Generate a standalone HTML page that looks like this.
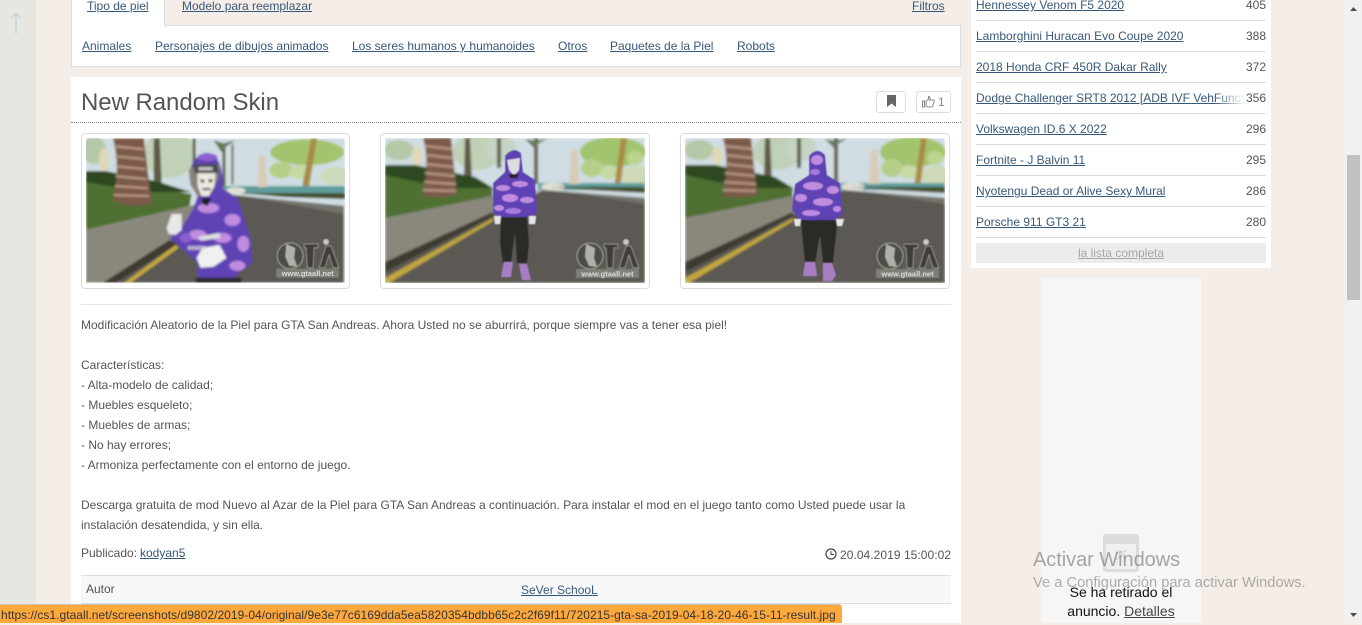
<!DOCTYPE html>
<html lang="es"><head><meta charset="utf-8"><title>New Random Skin</title>
<style>
html,body{margin:0;padding:0;width:1362px;height:623px;overflow:hidden;background:#f5eee8;font:12px/20px "Liberation Sans",Arial,sans-serif;color:#555}
div,a,span,svg{position:absolute;white-space:nowrap}
a{color:#38587a;text-decoration:underline;line-height:20px}
.g{line-height:20px;left:81px}
.sep{left:976px;width:290px;height:1px;background:#ddd}
.v{left:1226px;width:40px;text-align:right;color:#555}
.r{left:976px}
.card{width:268px;height:154px;top:133px;border:1px solid #ddd;border-radius:4px;background:#fff}
</style></head><body>
<div style="left:0;top:0;width:36px;height:623px;background:#e8e6e1"></div>
<svg style="left:9px;top:11px" width="14" height="24" viewBox="0 0 14 24"><path d="M7 1V23M2.500 7.500 7 2l4.500 5.500" fill="none" stroke="#c5d6e0" stroke-width="1.500"/></svg>

<div style="left:71px;top:0;width:890px;height:25px;border-bottom:1px solid #ddd"></div>
<div style="left:71px;top:0;width:92px;height:26px;background:#fff;border-right:1px solid #ddd;border-left:1px solid #ddd"></div>
<a style="left:87px;top:-4px">Tipo de piel</a>
<a style="left:182px;top:-4px">Modelo para reemplazar</a>
<a style="left:912px;top:-4px">Filtros</a>
<div style="left:71px;top:26px;width:888px;height:40px;background:#fff;border:1px solid #ddd;border-top:0"></div>
<a style="left:82px;top:36px">Animales</a>
<a style="left:155px;top:36px">Personajes de dibujos animados</a>
<a style="left:352px;top:36px">Los seres humanos y humanoides</a>
<a style="left:558px;top:36px">Otros</a>
<a style="left:610px;top:36px">Paquetes de la Piel</a>
<a style="left:737px;top:36px">Robots</a>

<div style="left:71px;top:77px;width:890px;height:546px;background:#fff"></div>
<div style="left:81px;top:89px;font-size:24px;line-height:28px;color:#555;letter-spacing:-.05px">New Random Skin</div>
<div style="left:71px;top:122px;width:890px;height:0;border-top:1px dotted #888"></div>
<div style="left:876px;top:91px;width:28px;height:20px;border:1px solid #ddd;border-radius:3px"></div>
<svg style="left:886px;top:95px" width="11" height="13" viewBox="0 0 11 13"><path d="M1 0H10V12L5.500 8.500 1 12Z" fill="#666"/></svg>
<div style="left:916px;top:91px;width:33px;height:20px;border:1px solid #ddd;border-radius:3px"></div>
<svg style="left:922px;top:95px" width="13" height="13" viewBox="0 0 13 13"><path d="M.5 6H2.500V12H.5ZM4 6.500 6.500 4V1.500C7.500 1 8 2 8 3.500L7.500 5H11.500C12.500 5 12.500 6.500 12 7L10.500 11.500C10.200 12 9.800 12 9 12H5.500L4 11Z" fill="none" stroke="#888"/></svg>
<div style="left:938px;top:92px;line-height:20px;font-size:12px;color:#888">1</div>

<svg width="0" height="0" style="left:0;top:0"><defs>
<filter id="b" x="-5%" y="-5%" width="110%" height="110%"><feGaussianBlur stdDeviation="1.100"/></filter>
<filter id="s" x="-5%" y="-5%" width="110%" height="110%"><feGaussianBlur stdDeviation="0.500"/></filter>
<clipPath id="c"><rect width="260" height="145"/></clipPath>
<g id="wm">
<g filter="url(#s)">
<circle cx="205" cy="118" r="13" fill="#4c4b47" stroke="#a5a49c"/>
<path d="M201 106l9 4-1 10 3 9-8-1-4-9z" fill="#b0afa8"/>
<path d="M219 106h14v4h-4l-1 20h-6l-1-20h-2z" fill="#3f3e3b" stroke="#a5a49c" stroke-width=".7"/>
<path d="M234 130l7-22h5l8 22h-6l-4-13-4 13z" fill="#3f3e3b" stroke="#a5a49c" stroke-width=".7"/>
<circle cx="241" cy="104" r="3" fill="#c8c7c0"/>
<rect x="191" y="131" width="63" height="9" fill="#7f7e77"/>
</g>
<text x="222.500" y="138.500" text-anchor="middle" font-family="Liberation Sans" font-weight="bold" font-size="7.500" fill="#dcdcd8">www.gtaall.net</text>
</g>
<g id="bg2">
<rect width="260" height="145" fill="#cfdde2"/>
<ellipse cx="228" cy="14" rx="33" ry="15" fill="#a3c46e"/><ellipse cx="207" cy="30" rx="11" ry="9" fill="#b5cf88"/><ellipse cx="224" cy="34" rx="9" ry="7" fill="#c7d9a4"/><ellipse cx="252" cy="38" rx="16" ry="10" fill="#cdd9b8"/><ellipse cx="250" cy="20" rx="8" ry="7" fill="#bcd48e"/>
<ellipse cx="14" cy="12" rx="15" ry="10" fill="#b5c9a8"/><ellipse cx="32" cy="18" rx="5" ry="10" fill="#e0d8b8"/>
<path d="M236 0h6l-7 50h-6z" fill="#a88c45"/>
<ellipse cx="92" cy="14" rx="24" ry="18" fill="#c1d1b8"/><ellipse cx="116" cy="10" rx="15" ry="13" fill="#c6d4c4"/>
<path d="M80 0h5l2 43h-8zM112 0h4v30h-4zM149 0h4v46h-4z" fill="#5e5b45"/><path d="M140 1l11 2 12-3-10 6-4 4z" fill="#68785a"/>
<path d="M153 45H260V52H153z" fill="#5e9c9c"/><path d="M186 12h6l3 34h-11z" fill="#d8ccb8"/>
<ellipse cx="168" cy="49" rx="12" ry="4" fill="#e0e0d5"/>
<path d="M0 27 108 50 107 60 0 80Z" fill="#4f7030"/><path d="M0 27h30l60 12 18 11H60L0 37z" fill="#2f4a22"/>
<path d="M0 80 107 58 155 52 108 76 0 124Z" fill="#8a887d"/>
<path d="M158 52 260 60V145H0V132L108 76Z" fill="#5b5852"/>
<path d="M158 52 260 60V66L195 56Z" fill="#75726a"/>
<path d="M108 74 0 124V134L108 78Z" fill="#3e3b30"/>
<path d="M108 80 0 140V145H4L108 83Z" fill="#c2a83c"/>
<path d="M165 49h95v6l-55-3z" fill="#44502c"/>
<path d="M38 0H66L72 56Q56 62 38 58 45 25 38 0Z" fill="#7c5a48"/><path d="M40 8l27 3M40 17l28 3M40 26l29 3M40 35l30 3M39 44l32 2M38 52l33 1" stroke="#b89a85" stroke-width="2.200"/>
</g>
</defs></svg>

<div class="card" style="left:81px;width:267px"></div>
<svg style="left:86px;top:138px" width="259" height="145" viewBox="0 0 260 145"><g clip-path="url(#c)"><g filter="url(#b)">
<rect width="260" height="145" fill="#cfdde2"/>
<ellipse cx="222" cy="14" rx="37" ry="13" fill="#a3c46e"/><ellipse cx="196" cy="32" rx="12" ry="8" fill="#b5cf88"/><ellipse cx="214" cy="34" rx="10" ry="7" fill="#c7d9a4"/><ellipse cx="250" cy="38" rx="15" ry="9" fill="#cdd9b8"/>
<ellipse cx="8" cy="12" rx="12" ry="14" fill="#b5c9a8"/><ellipse cx="18" cy="22" rx="5" ry="12" fill="#e0d8b8"/>
<path d="M226 0h6l-9 54h-7z" fill="#a88c45"/>
<ellipse cx="84" cy="16" rx="26" ry="24" fill="#c1d1b8"/>
<path d="M68 0h6l2 45h-8zM107 0h3v30h-3zM137 6h3v50h-3zM146 6h2v40h-2z" fill="#5e5b45"/><path d="M128 2l10 3 12-3-10 7-4 5z" fill="#68785a"/>
<path d="M135 48H260V56H135z" fill="#5e9c9c"/><path d="M174 17h6l2 32h-10z" fill="#d8ccb8"/>
<ellipse cx="150" cy="53" rx="10" ry="4" fill="#e0e0d5"/>
<path d="M0 40 106 56 104 68 0 92Z" fill="#4f7030"/><path d="M0 33h20l50 10 36 11H60L0 44z" fill="#2f4a22"/>
<path d="M0 92 104 68 147 57 84 104 17 145H0Z" fill="#8a887d"/>
<path d="M147 57 259 68V145H17L84 104Z" fill="#5b5852"/>
<path d="M147 57 259 68V76L180 62Z" fill="#75726a"/>
<path d="M84 102 17 145H30L92 106Z" fill="#3e3b30"/>
<path d="M90 107 38 145H45L93 110Z" fill="#c2a83c"/>
<path d="M155 55h105v6l-60-2z" fill="#44502c"/>
<path d="M27 0H58L66 65Q48 72 27 62 35 30 27 0Z" fill="#7c5a48"/><path d="M28 8l30 3M29 18l30 3M30 28l30 3M30 38l31 3M29 48l33 2M28 57l35 1" stroke="#b89a85" stroke-width="2.200"/>
<path d="M112 145 112 125 84 100 97 88 108 70 112 58C102 45 100 22 118 15 132 12 138 28 137 50L152 60 165 100 167 125 150 138 156 145Z" fill="#5f42b4"/>
<ellipse cx="123" cy="70" rx="11" ry="5" fill="#c08ce0"/><ellipse cx="147" cy="82" rx="8" ry="6" fill="#c08ce0"/><ellipse cx="112" cy="97" rx="9" ry="5" fill="#c08ce0"/><ellipse cx="137" cy="100" rx="9" ry="5" fill="#c08ce0"/><ellipse cx="158" cy="106" rx="6" ry="8" fill="#c08ce0"/><ellipse cx="152" cy="128" rx="8" ry="5" fill="#c08ce0"/><ellipse cx="100" cy="100" rx="6" ry="5" fill="#8a5fcf"/><ellipse cx="122" cy="19" rx="10" ry="4" fill="#8a5fcf"/>
<path d="M105 47 103 32 112 26 134 26 133 40 124 58 112 58Z" fill="#888278"/>
<path d="M112 34H130L129 48 123 58H116L112 48Z" fill="#ece9e0"/><path d="M115 41l4 1-1 3-3-1zM123 41l4 0 0 3-4 0zM117 50h8v2h-8z" fill="#3a3a3a"/>
<path d="M108 26h24l1 9h-24z" fill="#4a4a48"/><path d="M113 29h14v3h-14z" fill="#cfcfcf"/>
<path d="M116 60h10l-4 8-5-2z" fill="#1e1e1e"/>
<path d="M81 90 86 76 96 76 96 92 90 97 83 96Z" fill="#e8e8e8"/>
<path d="M111 120 117 110 134 107 141 120 128 129 115 130Z" fill="#f0f0f0"/><path d="M102 108h18v4h-18z" fill="#ddd" opacity=".7"/>
<path d="M112 99l22-4 1 5-20 3z" fill="#ddd"/><path d="M110 140h46v5h-46z" fill="#2a2a25"/>
</g><use href="#wm"/></g></svg>

<div class="card" style="left:380px"></div>
<svg style="left:385px;top:138px" width="260" height="145" viewBox="0 0 260 145"><g clip-path="url(#c)"><g filter="url(#s)"><use href="#bg2" filter="url(#b)"/>
<path d="M108 75V45L120 34 120 18Q128 8 136 15L138 34 150 42 152 76 140 80H118Z" fill="#5f42b4"/>
<ellipse cx="118" cy="50" rx="7" ry="3" fill="#c08ce0"/><ellipse cx="135" cy="46" rx="8" ry="3" fill="#c08ce0"/><ellipse cx="125" cy="60" rx="8" ry="4" fill="#c08ce0"/><ellipse cx="142" cy="62" rx="7" ry="3" fill="#c08ce0"/><ellipse cx="114" cy="70" rx="5" ry="3" fill="#c08ce0"/><ellipse cx="128" cy="73" rx="8" ry="3" fill="#a57bdc"/>
<path d="M122 22 135 20 134 32 129 38 124 32Z" fill="#ddd"/><path d="M124 36h10l-2 4h-7z" fill="#222"/>
<path d="M116 79H142L144 105 142 125H132L130 95 126 125H118L115 105Z" fill="#2a2925"/>
<path d="M109 78h7l-1 8h-5zM144 78h7l-1 8h-6z" fill="#e4e4e4"/>
<path d="M119 124h9l-2 15h-10zM134 126h8l4 16h-9z" fill="#a77ec2"/>
</g><use href="#wm"/></g></svg>

<div class="card" style="left:680px"></div>
<svg style="left:685px;top:138px" width="260" height="145" viewBox="0 0 260 145"><g clip-path="url(#c)"><g filter="url(#s)"><use href="#bg2" filter="url(#b)"/>
<path d="M107 72 110 46 124 37 124 18Q132 8 140 17L142 37 155 45 158 76 150 82H116Z" fill="#5f42b4"/>
<ellipse cx="132" cy="22" rx="6" ry="5" fill="#c08ce0"/><ellipse cx="130" cy="34" rx="5" ry="3" fill="#a57bdc"/><ellipse cx="128" cy="48" rx="10" ry="4" fill="#c08ce0"/><ellipse cx="148" cy="52" rx="6" ry="4" fill="#c08ce0"/><ellipse cx="116" cy="60" rx="6" ry="4" fill="#c08ce0"/><ellipse cx="138" cy="64" rx="10" ry="4" fill="#c08ce0"/><ellipse cx="126" cy="75" rx="9" ry="3" fill="#c08ce0"/><ellipse cx="152" cy="71" rx="4" ry="3" fill="#c08ce0"/>
<path d="M116 82H153L150 105 148 125H138L135 97 130 125H120L118 105Z" fill="#2a2925"/>
<path d="M109 81h7l-1 7h-5zM151 81h8l-2 7h-5z" fill="#e4e4e4"/>
<path d="M120 124h10l2 14h-14zM138 125h9l4 12-4 6h-9z" fill="#a77ec2"/>
</g><use href="#wm"/></g></svg>

<div style="left:81px;top:304px;width:870px;height:1px;background:#e5e5e5"></div>
<div class="g" style="top:315px">Modificación Aleatorio de la Piel para GTA San Andreas. Ahora Usted no se aburrirá, porque siempre vas a tener esa piel!</div>
<div class="g" style="top:355px">Características:</div>
<div class="g" style="top:375px">- Alta-modelo de calidad;</div>
<div class="g" style="top:395px">- Muebles esqueleto;</div>
<div class="g" style="top:415px">- Muebles de armas;</div>
<div class="g" style="top:435px">- No hay errores;</div>
<div class="g" style="top:455px">- Armoniza perfectamente con el entorno de juego.</div>
<div class="g" style="top:495px">Descarga gratuita de mod Nuevo al Azar de la Piel para GTA San Andreas a continuación. Para instalar el mod en el juego tanto como Usted puede usar la</div>
<div class="g" style="top:515px">instalación desatendida, y sin ella.</div>
<div class="g" style="top:543px">Publicado:</div>
<a style="left:140px;top:543px">kodyan5</a>
<svg style="left:825px;top:548px" width="12" height="12" viewBox="0 0 12 12"><circle cx="6" cy="6" r="5" fill="none" stroke="#444" stroke-width="1.200"/><path d="M6 3V6.500H9" fill="none" stroke="#444"/></svg>
<div style="left:840px;top:545px;line-height:20px;letter-spacing:.05px">20.04.2019 15:00:02</div>

<div style="left:81px;top:575px;width:870px;height:27px;background:#f8f8f8;border-top:1px solid #ddd;border-bottom:1px solid #ddd"></div>
<div style="left:86px;top:579px;line-height:20px">Autor</div>
<a style="left:521px;top:580px">SeVer SchooL</a>

<div style="left:971px;top:0;width:300px;height:268px;background:#fff"></div>
<a class="r" style="top:-5px">Hennessey Venom F5 2020</a><div class="v" style="top:-5px">405</div><div class="sep" style="top:20px"></div>
<a class="r" style="top:26px">Lamborghini Huracan Evo Coupe 2020</a><div class="v" style="top:26px">388</div><div class="sep" style="top:51px"></div>
<a class="r" style="top:57px">2018 Honda CRF 450R Dakar Rally</a><div class="v" style="top:57px">372</div><div class="sep" style="top:82px"></div>
<a class="r" style="top:88px;overflow:hidden;width:268px">Dodge Challenger SRT8 2012 [ADB IVF VehFuncs]</a>
<div style="left:1214px;top:88px;width:31px;height:20px;background:linear-gradient(90deg,rgba(255,255,255,0),#fff)"></div>
<div class="v" style="top:88px">356</div><div class="sep" style="top:113px"></div>
<a class="r" style="top:119px">Volkswagen ID.6 X 2022</a><div class="v" style="top:119px">296</div><div class="sep" style="top:144px"></div>
<a class="r" style="top:150px">Fortnite - J Balvin 11</a><div class="v" style="top:150px">295</div><div class="sep" style="top:175px"></div>
<a class="r" style="top:181px">Nyotengu Dead or Alive Sexy Mural</a><div class="v" style="top:181px">286</div><div class="sep" style="top:206px"></div>
<a class="r" style="top:212px">Porsche 911 GT3 21</a><div class="v" style="top:212px">280</div><div class="sep" style="top:237px"></div>
<div style="left:976px;top:243px;width:290px;height:20px;background:#ececec;text-align:center"><a style="position:static;color:#a5a5a5">la lista completa</a></div>

<div style="left:1041px;top:278px;width:160px;height:345px;background:#f6f6f6"></div>
<svg style="left:1103px;top:533px" width="37" height="40" viewBox="0 0 37 40"><rect width="36" height="38" y="1" rx="3" fill="#dcdcdc"/><rect x="3" y="11" width="30" height="25" fill="#f0f0f0"/><path d="M13 17 23 27M23 17 13 27" stroke="#dcdcdc" stroke-width="2"/></svg>
<div style="left:1033px;top:547px;font-size:20px;line-height:26px;color:rgba(110,110,110,.6);letter-spacing:-.05px">Activar Windows</div>
<div style="left:1033px;top:573px;font-size:14.700px;line-height:20px;color:rgba(110,110,110,.55)">Ve a Configuración para activar Windows.</div>
<div style="left:1041px;top:583px;width:160px;text-align:center;font-size:14px;line-height:19px;color:#111">Se ha retirado el</div>
<div style="left:1041px;top:602px;width:160px;text-align:center;font-size:14px;line-height:19px;color:#111">anuncio. <span style="position:static;text-decoration:underline;color:#444">Detalles</span></div>

<div style="left:0;top:604px;width:842px;height:19px;background:#ffa93c;border-top:1px solid #c9c4bd;border-radius:0 3px 0 0;box-sizing:border-box;line-height:20px;color:#333;padding-left:1px;letter-spacing:.04px">https://cs1.gtaall.net/screenshots/d9802/2019-04/original/9e3e77c6169dda5ea5820354bdbb65c2c2f69f11/720215-gta-sa-2019-04-18-20-46-15-11-result.jpg</div>

<div style="left:1345px;top:0;width:17px;height:623px;background:#f1f1f1"></div>
<div style="left:1347px;top:155px;width:13px;height:145px;background:#c1c1c1"></div>
<svg style="left:1349px;top:6px" width="9" height="6" viewBox="0 0 9 6"><path d="M4.500 1 8 5H1Z" fill="#505050"/></svg>
<svg style="left:1349px;top:612px" width="9" height="6" viewBox="0 0 9 6"><path d="M4.500 5 8 1H1Z" fill="#505050"/></svg>
</body></html>
